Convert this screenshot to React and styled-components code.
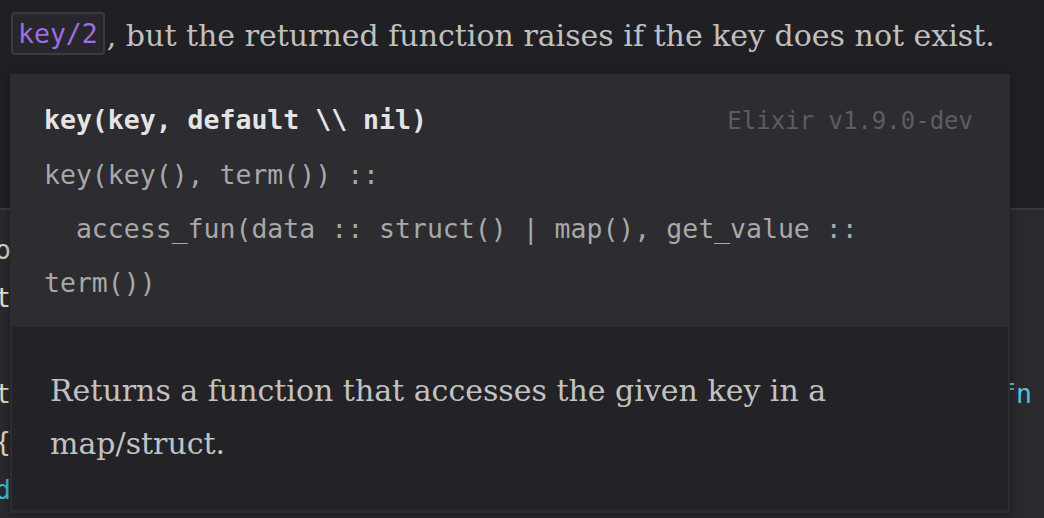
import React from 'react';
import styled, { createGlobalStyle } from 'styled-components';

const GlobalStyle = createGlobalStyle`
  html, body {
    margin:0;
    padding:0;
    background:#1f1f24;
  }
`;

const editorLines = [
	{ left: 'o', leftColor: '#d9d0c2' },
	{ left: 't', leftColor: '#e6ddcf' },
	{ left: '' },
	{ left: 't', leftColor: '#e2d4bf', right: 'fn', rightColor: '#4fc3df' },
	{ left: '{', leftColor: '#d8cfc0' },
	{ left: 'd', leftColor: '#3fb6d6' },
];

const spec = `key(key(), term()) ::
  access_fun(data :: struct() | map(), get_value ::
term())`;

const App = () => {
	return (
		<Page>
			<GlobalStyle />
			<DocArea>
				<Sentence>
					<InlineCode>key/2</InlineCode>, but the returned function raises if the key does not exist.
				</Sentence>
			</DocArea>
			<Editor>
				{editorLines.map((line, i) =>
					<EditorLine key={i}>
						<Token color={line.leftColor}>{line.left}</Token>
						<Token color={line.rightColor}>{line.right}</Token>
					</EditorLine>
				)}
			</Editor>

			<Tooltip>
				<SignatureSection>
					<Header>
						<Title>key(key, default \\ nil)</Title>
						<Version>Elixir v1.9.0-dev</Version>
					</Header>
					<Spec>{spec}</Spec>
				</SignatureSection>
				<DocSection>
					<DocText>Returns a function that accesses the given key in a map/struct.</DocText>
				</DocSection>
			</Tooltip>
		</Page>
	)
}

const Page = styled.div`
	position:relative;
	width:1044px;
	height:518px;
	overflow:hidden;
	display:flex;
	flex-direction:column;
	background:#1f1f24;
`
const DocArea = styled.div`
	height:208px;
	box-sizing:border-box;
	padding:12px 0 0 11px;
	flex-shrink:0;
`
const Sentence = styled.p`
	margin:0;
	font-family:"DejaVu Serif", "Liberation Serif", serif;
	font-size:30px;
	color:#c0c0c0;
	white-space:nowrap;
	line-height:48px;
`
const InlineCode = styled.code`
	display:inline-block;
	vertical-align:top;
	font-family:"DejaVu Sans Mono", monospace;
	font-size:26.5px;
	line-height:39px;
	color:#9b6fe3;
	background:#26262b;
	border:2px solid #3a3a40;
	border-radius:4px;
	padding:0 5px;
	margin-right:2px;
`
const Editor = styled.div`
	flex:1;
	background:#29292e;
	border-top:2px solid #38383e;
	padding-top:16px;
	font-family:"DejaVu Sans Mono", monospace;
	font-size:26.5px;
	line-height:48px;
`
const EditorLine = styled.div`
	display:flex;
	justify-content:space-between;
	height:48px;
	margin-left:-5px;
	padding-right:12px;
`
const Token = styled.span`
	color:${props => props.color || '#d0d0d0'};
`
const Tooltip = styled.div`
	position:absolute;
	left:10px;
	top:74px;
	width:1000px;
	box-sizing:border-box;
	background:#2c2c31;
	padding:0 2px 3px;
	box-shadow:0 2px 8px rgba(0,0,0,0.35);
`
const SignatureSection = styled.div`
	padding:19px 35px 17px 32px;
	font-family:"DejaVu Sans Mono", monospace;
	font-size:26.5px;
	line-height:54px;
`
const Header = styled.div`
	display:flex;
	justify-content:space-between;
	align-items:baseline;
`
const Title = styled.span`
	font-weight:bold;
	color:#e4e4e4;
`
const Version = styled.span`
	font-size:24px;
	color:#5d5d64;
`
const Spec = styled.pre`
	margin:0;
	font:inherit;
	white-space:pre;
	color:#a8a8a8;
`
const DocSection = styled.div`
	background:#222227;
	padding:37px 100px 40px 38px;
`
const DocText = styled.p`
	margin:0;
	font-family:"DejaVu Serif", "Liberation Serif", serif;
	font-size:30px;
	line-height:53px;
	color:#c2c2c2;
`

export default App
